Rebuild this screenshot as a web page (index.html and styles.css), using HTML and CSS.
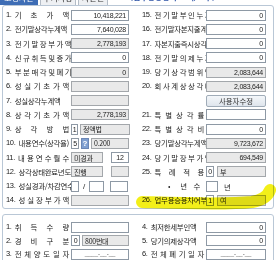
FILE: index.html
```html
<!DOCTYPE html>
<html lang="ko">
<head>
<meta charset="utf-8">
<link rel="stylesheet" href="styles.css">
</head>
<body>
<div class="tabs">
  <div class="tab on">고정자산</div>
  <div class="tab">추가사항</div>
  <div class="tab t3">자산변동</div>
  <div class="note">(업무용승용차 1:여/0:부)</div>
</div>
<div class="panel main">
  <div class="col left">
    <div class="row"><span class="lb"><span class="no">1.</span><span class="tx sp">기 초 가 액</span></span><span class="f w58">10,418,221</span></div>
    <div class="row"><span class="lb"><span class="no">2.</span><span class="tx">전기말상각누계액</span></span><span class="f w58">7,640,028</span></div>
    <div class="row"><span class="lb"><span class="no">3.</span><span class="tx sp">전 기 말 장 부 가 액</span></span><span class="f g w58">2,778,193</span></div>
    <div class="row"><span class="lb"><span class="no">4.</span><span class="tx sp">신 규 취 득 및 증 가</span></span><span class="f w58">0</span></div>
    <div class="row"><span class="lb"><span class="no">5.</span><span class="tx sp">부 분 매 각 및 폐 기</span></span><span class="f g w58">0</span></div>
    <div class="row"><span class="lb"><span class="no">6.</span><span class="tx sp">성 실 기 초 가 액</span></span><span class="f g w58"></span></div>
    <div class="row"><span class="lb"><span class="no">7.</span><span class="tx">성실상각누계액</span></span><span class="f g w58"></span></div>
    <div class="row"><span class="lb"><span class="no">8.</span><span class="tx sp">상 각 기 초 가 액</span></span><span class="f g w58">2,778,193</span></div>
    <div class="row"><span class="lb"><span class="no">9.</span><span class="tx sp">상 각 방 법</span></span><span class="f c w7">1</span><span class="f g l w50 ml2">정액법</span></div>
    <div class="row"><span class="lb"><span class="no">10.</span><span class="tx">내용연수(상각율)</span></span><span class="f c w8">5</span><span class="q">?</span><span class="f g l w38">0.200</span></div>
    <div class="row"><span class="lb"><span class="no">11.</span><span class="tx sp">내 용 연 수 월 수</span></span><span class="f g l w32">미경과</span><span class="f c w18 ml8">12</span></div>
    <div class="row"><span class="lb"><span class="no">12.</span><span class="tx">상각상태완료년도</span></span><span class="f g l w32">진행</span><span class="f g w18 ml8"></span></div>
    <div class="row"><span class="lb"><span class="no">13.</span><span class="tx">성실경과/차감연수</span></span><span class="f w8"></span><span class="slash">/</span><span class="f w15"></span><span class="f w18 ml6"></span></div>
    <div class="row"><span class="lb"><span class="no">14.</span><span class="tx sp">성 실 장 부 가 액</span></span><span class="f g w58"></span></div>
  </div>
  <div class="col right">
    <div class="row"><span class="lb"><span class="no">15.</span><span class="tx sp">전 기 말 부 인 누 계</span></span><span class="f w60">0</span></div>
    <div class="row"><span class="lb"><span class="no">16.</span><span class="tx">전기말자본지출계</span></span><span class="f w60">0</span></div>
    <div class="row"><span class="lb"><span class="no">17.</span><span class="tx">자본지출즉시상각</span></span><span class="f w60">0</span></div>
    <div class="row"><span class="lb"><span class="no">18.</span><span class="tx sp">전 기 말 의 제 누 계</span></span><span class="f w60">0</span></div>
    <div class="row"><span class="lb"><span class="no">19.</span><span class="tx sp">당 기 상 각 범 위 액</span></span><span class="f g w60">2,083,644</span></div>
    <div class="row"><span class="lb"><span class="no">20.</span><span class="tx sp">회 사 계 상 상 각 비</span></span><span class="f g w60">2,083,644</span></div>
    <div class="row"><span class="lb"></span><span class="btn">사용자수정</span></div>
    <div class="row"><span class="lb"><span class="no">21.</span><span class="tx sp">특 별 상 각 률</span></span><span class="f w60"></span></div>
    <div class="row"><span class="lb"><span class="no">22.</span><span class="tx sp">특 별 상 각 비</span></span><span class="f w60">0</span></div>
    <div class="row"><span class="lb"><span class="no">23.</span><span class="tx">당기말상각누계액</span></span><span class="f g w60">9,723,672</span></div>
    <div class="row"><span class="lb"><span class="no">24.</span><span class="tx sp">당 기 말 장 부 가 액</span></span><span class="f g w60">694,549</span></div>
    <div class="row"><span class="lb"><span class="no">25.</span><span class="tx sp">특 례 적 용</span></span><span class="f c w8">0</span><span class="f g l w49 ml3">부</span></div>
    <div class="row"><span class="lb yr"><span class="dot">•</span><span class="tx sp ys">년 수</span></span><span class="f w12"></span><span class="unit">년</span></div>
    <div class="row"><span class="lb"><span class="no">26.</span><span class="tx">업무용승용차여부</span></span><span class="f c w8">1</span><span class="f g l w49 ml3">여</span></div>
  </div>
</div>
<div class="panel sub">
  <div class="col left">
    <div class="row"><span class="lb"><span class="no">1.</span><span class="tx sp">취 득 수 량</span></span><span class="f w58"></span></div>
    <div class="row"><span class="lb"><span class="no">2.</span><span class="tx sp">경 비 구 분</span></span><span class="f c w9">0</span><span class="f g l w47 ml2">800번대</span></div>
    <div class="row"><span class="lb"><span class="no">3.</span><span class="tx sp">전 체 양 도 일 자</span></span><span class="f c d w58">____-__-__</span></div>
  </div>
  <div class="col right">
    <div class="row"><span class="lb"><span class="no">4.</span><span class="tx">최저한세부인액</span></span><span class="f w60">0</span></div>
    <div class="row"><span class="lb"><span class="no">5.</span><span class="tx">당기의제상각액</span></span><span class="f w60">0</span></div>
    <div class="row"><span class="lb"><span class="no">6.</span><span class="tx sp">전 체 폐 기 일 자</span></span><span class="f c d w60">____-__-__</span></div>
  </div>
</div>
<svg class="marker" width="276" height="260" viewBox="0 0 276 260">
  <path d="M142 202 C 175 203, 225 205, 252 202 C 263 200, 268 196, 270 190" fill="none" stroke="#f2ee00" stroke-width="12" stroke-linecap="round"/>
</svg>
</body>
</html>
```
FILE: styles.css
```css
* { box-sizing: border-box; margin: 0; padding: 0; }
body {
  width: 276px;
  height: 260px;
  overflow: hidden;
  background: #fff;
  font-family: "Noto Sans CJK KR", sans-serif;
  color: #222;
  position: relative;
}
.tabs {
  height: 5px;
  overflow: hidden;
  display: flex;
  align-items: flex-end;
  gap: 2px;
}
.tab {
  height: 14px;
  width: 36px;
  font-size: 8px;
  line-height: 12px;
  text-align: center;
  background: #eef0f3;
  border: 1px solid #b4bcc6;
  border-bottom: none;
  color: #333;
  flex: none;
}
.tab.on { width: 38px; background: #3e6db5; border-color: #3e6db5; color: #fff; }
.tab.t3 { width: 30px; }
.note {
  margin-left: 20px;
  font-size: 8px;
  line-height: 12px;
  height: 14px;
  color: #2f55a8;
  font-weight: bold;
  white-space: nowrap;
}
.panel {
  margin: 0 2px;
  border: 1px solid #b9c7d6;
  border-radius: 3px;
  display: grid;
  grid-template-columns: 134px 1fr;
}
.main { padding: 3px 0 2px; }
.sub { margin-top: 5px; padding: 6px 0 4px; }
.col { display: flex; flex-direction: column; gap: 2.25px; }
.sub .col { gap: 1.5px; }
.left { padding-left: 3px; }
.right { padding-left: 5px; }
.row {
  display: flex;
  align-items: center;
  height: 12px;
}
.lb {
  display: flex;
  width: 65px;
  padding-right: 2px;
  font-size: 7.4px;
  line-height: 12px;
  white-space: nowrap;
  letter-spacing: -0.25px;
  flex: none;
}
.right .lb { width: 64px; }
.no {
  font-family: "Liberation Sans", sans-serif;
  font-size: 7.5px;
  letter-spacing: -0.3px;
  margin-right: 3px;
}
.tx { flex: 1; }
.tx.sp { text-align: justify; text-align-last: justify; }
.yr { padding-left: 26px; padding-right: 6px; }
.dot { font-size: 7px; margin-right: 10px; }
.f {
  height: 11px;
  border: 1px solid #8e99a5;
  background: #fff;
  font-family: "Liberation Sans", sans-serif;
  font-size: 7px;
  letter-spacing: -0.25px;
  display: flex;
  align-items: center;
  justify-content: flex-end;
  padding: 0 2px;
  white-space: nowrap;
  overflow: hidden;
  flex: none;
}
.f.g { background: #e9e9e9; border-color: #a3a7ab; }
.f.l { justify-content: flex-start; font-family: "Noto Sans CJK KR", sans-serif; font-size: 7px; }
.f.c { justify-content: center; padding: 0; }
.f.d { color: #555; letter-spacing: 0; font-size: 6px; }
.w7 { width: 7px; }
.w8 { width: 8px; }
.w9 { width: 9px; }
.w12 { width: 12px; }
.w15 { width: 15px; }
.w18 { width: 18px; }
.w32 { width: 32px; }
.w38 { width: 38px; }
.w47 { width: 47px; }
.w49 { width: 49px; }
.w50 { width: 50px; }
.w58 { width: 58px; }
.w60 { width: 60px; }
.ml2 { margin-left: 2px; }
.ml3 { margin-left: 3px; }
.ml6 { margin-left: 6px; }
.ml8 { margin-left: 8px; }
.q {
  width: 8px;
  height: 11px;
  margin: 0 2px;
  background: #7f9fd0;
  border: 1px solid #6b86b5;
  color: #fff;
  font-family: "Liberation Sans", sans-serif;
  font-weight: bold;
  font-size: 8px;
  line-height: 9px;
  text-align: center;
  flex: none;
}
.slash {
  width: 10px;
  text-align: center;
  font-family: "Liberation Sans", sans-serif;
  font-size: 8px;
}
.unit { font-size: 7.4px; margin-left: 6px; }
.btn {
  width: 60px;
  height: 12px;
  border: 1px solid #a0acb8;
  border-radius: 2px;
  background: linear-gradient(#f4f7fa, #dfe5ec);
  font-size: 7.4px;
  line-height: 10px;
  text-align: center;
  color: #333;
  flex: none;
}
.marker {
  position: absolute;
  left: 0;
  top: 0;
  pointer-events: none;
  mix-blend-mode: multiply;
  opacity: 0.9;
}
```
